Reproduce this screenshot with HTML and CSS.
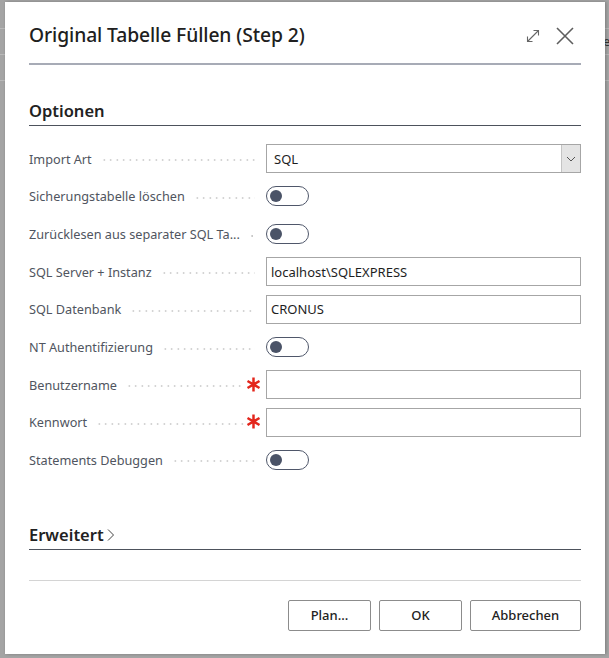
FILE: index.html
```html
<!DOCTYPE html>
<html lang="de">
<head>
<meta charset="utf-8">
<title>Original Tabelle Füllen (Step 2)</title>
<link rel="stylesheet" href="styles.css">
</head>
<body>
<div class="backdrop-text">e</div>
<div class="dialog">
  <div class="header">
    <h1 class="title">Original Tabelle Füllen (Step 2)</h1>
    <div class="header-icons">
      <svg class="icon-expand" width="16" height="16" viewBox="0 0 16 16">
        <path d="M2.5 13.5 L13.5 2.5 M8.5 2.5 H13.5 V7.5 M2.5 8.5 V13.5 H7.5" fill="none" stroke="#666" stroke-width="1.1"/>
      </svg>
      <svg class="icon-close" width="18" height="18" viewBox="0 0 18 18">
        <path d="M1 1 L17 17 M17 1 L1 17" fill="none" stroke="#5e5e5e" stroke-width="1.6"/>
      </svg>
    </div>
  </div>
  <div class="header-rule"></div>

  <div class="section-head">Optionen</div>

  <div class="fields">
    <div class="row">
      <div class="label"><span class="text">Import Art</span><span class="leader"></span></div>
      <div class="select"><span class="value">SQL</span><span class="drop"><svg width="10" height="6" viewBox="0 0 10 6"><path d="M1 1 L5 5 L9 1" fill="none" stroke="#555" stroke-width="1"/></svg></span></div>
    </div>
    <div class="row">
      <div class="label"><span class="text">Sicherungstabelle löschen</span><span class="leader"></span></div>
      <div class="toggle"><span class="knob"></span></div>
    </div>
    <div class="row">
      <div class="label"><span class="text">Zurücklesen aus separater SQL Ta...</span><span class="leader"></span></div>
      <div class="toggle"><span class="knob"></span></div>
    </div>
    <div class="row">
      <div class="label"><span class="text">SQL Server + Instanz</span><span class="leader"></span></div>
      <div class="input">localhost\SQLEXPRESS</div>
    </div>
    <div class="row">
      <div class="label"><span class="text">SQL Datenbank</span><span class="leader"></span></div>
      <div class="input">CRONUS</div>
    </div>
    <div class="row">
      <div class="label"><span class="text">NT Authentifizierung</span><span class="leader"></span></div>
      <div class="toggle"><span class="knob"></span></div>
    </div>
    <div class="row">
      <div class="label req"><span class="text">Benutzername</span><span class="leader"></span>
        <svg class="star" width="15" height="15" viewBox="0 0 14 14"><path d="M7 0.5 V13.5 M1.4 3.75 L12.6 10.25 M12.6 3.75 L1.4 10.25" stroke="#e3261c" stroke-width="2.3" fill="none"/></svg>
      </div>
      <div class="input"></div>
    </div>
    <div class="row">
      <div class="label req"><span class="text">Kennwort</span><span class="leader"></span>
        <svg class="star" width="15" height="15" viewBox="0 0 14 14"><path d="M7 0.5 V13.5 M1.4 3.75 L12.6 10.25 M12.6 3.75 L1.4 10.25" stroke="#e3261c" stroke-width="2.3" fill="none"/></svg>
      </div>
      <div class="input"></div>
    </div>
    <div class="row">
      <div class="label"><span class="text">Statements Debuggen</span><span class="leader"></span></div>
      <div class="toggle"><span class="knob"></span></div>
    </div>
  </div>

  <div class="section-head advanced">Erweitert<svg class="chev" width="8" height="14" viewBox="0 0 8 14"><path d="M1 1.5 L6.5 7 L1 12.5" fill="none" stroke="#444" stroke-width="1"/></svg></div>

  <div class="footer-rule"></div>

  <div class="buttons">
    <button class="btn btn-plan">Plan...</button>
    <button class="btn btn-ok">OK</button>
    <button class="btn btn-cancel">Abbrechen</button>
  </div>
</div>
</body>
</html>
```
FILE: styles.css
```css
html, body {
  margin: 0;
  padding: 0;
}
body {
  width: 609px;
  height: 658px;
  overflow: hidden;
  background-color: #a4a4a4;
  background-image:
    linear-gradient(#b9b9b9, #b9b9b9),
    linear-gradient(#b9b9b9, #b9b9b9),
    linear-gradient(#b9b9b9, #b9b9b9);
  background-size: 100% 1px, 100% 1px, 100% 1px;
  background-position: 0 28px, 0 54px, 0 80px;
  background-repeat: no-repeat;
  font-family: "Noto Sans", "Open Sans", sans-serif;
  position: relative;
}
.backdrop-text {
  position: absolute;
  left: 603px;
  top: 32px;
  font-size: 13px;
  color: #333;
}
.dialog {
  position: relative;
  margin: 2px 0 0 5px;
  width: 600px;
  height: 652px;
  box-sizing: border-box;
  background: #fff;
  padding: 19px 24px 0 24px;
  box-shadow: 1px 0 3px rgba(0,0,0,0.25);
}
.header {
  display: flex;
  align-items: center;
  justify-content: space-between;
  height: 28px;
}
.title {
  margin: 0;
  font-size: 19.3px;
  font-weight: 500;
  line-height: 28px;
  color: #202020;
  letter-spacing: -0.1px;
}
.header-icons {
  display: flex;
  align-items: center;
  gap: 15px;
  margin-right: 7px;
  margin-top: 2px;
}
.header-rule {
  margin-top: 14px;
  height: 2px;
  background: #a7abb6;
}
.section-head {
  margin-top: 34px;
  font-size: 16.5px;
  font-weight: 600;
  line-height: 24px;
  color: #222;
  padding-bottom: 2px;
  border-bottom: 1px solid #4d525c;
  display: flex;
  align-items: center;
}
.section-head.advanced {
  margin-top: 44px;
}
.chev {
  margin-left: 3px;
  margin-top: 1px;
}
.fields {
  margin-top: 14px;
}
.row {
  display: flex;
  align-items: center;
  height: 37.65px;
}
.label {
  width: 237px;
  flex: none;
  display: flex;
  align-items: center;
  font-size: 12.7px;
  color: #505560;
  white-space: nowrap;
}
.label .text {
  flex: none;
}
.leader {
  flex: 1;
  height: 2px;
  margin: 3px 11px 0 9px;
  background-image: radial-gradient(circle, #c8c8c8 0.8px, transparent 1.1px);
  background-size: 6.5px 2px;
  background-repeat: repeat-x;
}
.label.req .leader {
  margin-right: 2px;
}
.star {
  flex: none;
  margin-right: 5px;
  margin-top: -1px;
}
.input, .select {
  flex: 1;
  height: 29px;
  box-sizing: border-box;
  border: 1px solid #a6a6a6;
  font-size: 13px;
  color: #1e1e1e;
  display: flex;
  align-items: center;
  padding-left: 4px;
}
.select {
  padding-left: 7px;
  justify-content: space-between;
  padding-right: 0;
}
.drop {
  width: 18px;
  height: 27px;
  background: #e4e4e4;
  border-left: 1px solid #c4c4c4;
  display: flex;
  align-items: center;
  justify-content: center;
}
.toggle {
  width: 43px;
  height: 20px;
  box-sizing: border-box;
  border: 1.5px solid #4f576a;
  border-radius: 10px;
  display: flex;
  align-items: center;
  padding-left: 3px;
}
.knob {
  width: 12px;
  height: 12px;
  border-radius: 50%;
  background: #4a5367;
}
.footer-rule {
  margin-top: 30px;
  height: 1px;
  background: #d4d4d4;
}
.buttons {
  margin-top: 19px;
  display: flex;
  justify-content: flex-end;
  gap: 8px;
}
.btn {
  height: 31px;
  box-sizing: border-box;
  border: 1px solid #8c8c8c;
  border-radius: 2px;
  background: #fff;
  font-family: "Noto Sans", "Open Sans", sans-serif;
  font-size: 13px;
  font-weight: 500;
  color: #222;
  padding: 0;
}
.btn-plan { width: 83px; }
.btn-ok { width: 83px; }
.btn-cancel { width: 111px; }
```
